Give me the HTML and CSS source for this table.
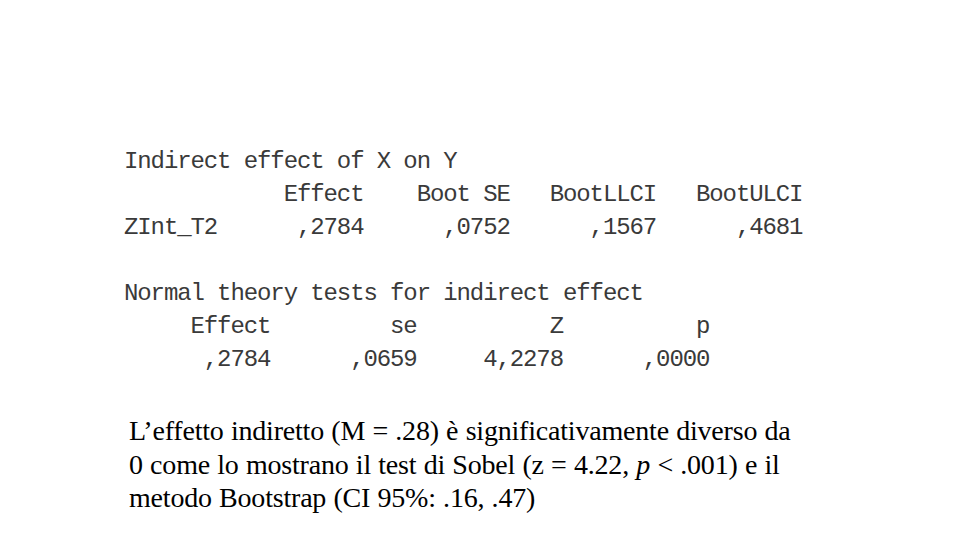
FILE: index.html
```html
<!DOCTYPE html>
<html lang="it">
<head>
<meta charset="utf-8">
<title>Indirect effect</title>
<link rel="stylesheet" href="styles.css">
</head>
<body>
<main class="slide">
<pre class="output">Indirect effect of X on Y
            Effect    Boot SE   BootLLCI   BootULCI
ZInt_T2      ,2784      ,0752      ,1567      ,4681

Normal theory tests for indirect effect
     Effect         se          Z          p
      ,2784      ,0659     4,2278      ,0000</pre>
<p class="summary">L’effetto indiretto (M = .28) è significativamente diverso da 0 come lo mostrano il test di Sobel (z = 4.22, <i>p</i> &lt; .001) e il metodo Bootstrap (CI 95%: .16, .47)</p>
</main>
</body>
</html>
```
FILE: styles.css
```css
html, body {
  margin: 0;
  padding: 0;
  background: #ffffff;
}
.slide {
  width: 960px;
  height: 540px;
  padding-top: 145px;
  box-sizing: border-box;
}
.output {
  margin: 0 0 0 124px;
  font-family: "Courier New", "Liberation Mono", monospace;
  font-size: 24px;
  letter-spacing: -1.1px;
  line-height: 33px;
  color: #3a3a3a;
  white-space: pre;
}
.summary {
  margin: 38px 0 0 129px;
  width: 668px;
  font-family: "Liberation Serif", "Times New Roman", serif;
  font-size: 28px;
  letter-spacing: -0.2px;
  word-spacing: 0.5px;
  line-height: 33.5px;
  color: #000000;
}
.summary i {
  font-style: italic;
}
```
